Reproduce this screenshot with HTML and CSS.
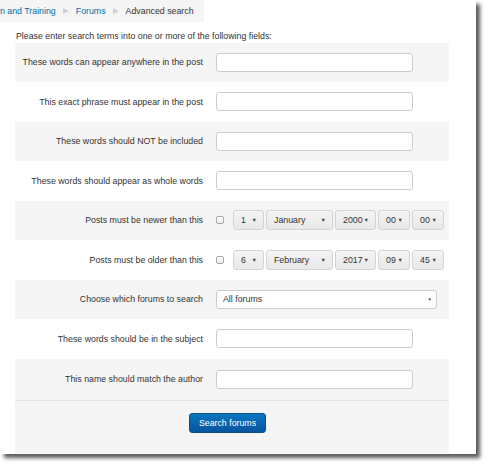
FILE: index.html
```html
<!DOCTYPE html>
<html>
<head>
<meta charset="utf-8">
<link rel="stylesheet" href="styles.css">
</head>
<body>
<div class="page">
  <div class="crumb">
    <a class="link">n and Training</a><span class="sep"></span><a class="link">Forums</a><span class="sep"></span><span class="current">Advanced search</span>
  </div>
  <div class="intro">Please enter search terms into one or more of the following fields:</div>
  <div class="form">
    <div class="row alt"><div class="label">These words can appear anywhere in the post</div><div class="input"></div></div>
    <div class="row"><div class="label">This exact phrase must appear in the post</div><div class="input"></div></div>
    <div class="row alt"><div class="label">These words should NOT be included</div><div class="input"></div></div>
    <div class="row"><div class="label">These words should appear as whole words</div><div class="input"></div></div>
    <div class="row alt"><div class="label">Posts must be newer than this</div>
      <div class="dates">
        <span class="check"></span>
        <span class="sel w-day"><span>1</span><span class="arr">▼</span></span>
        <span class="sel w-mon"><span>January</span><span class="arr">▼</span></span>
        <span class="sel w-year"><span>2000</span><span class="arr">▼</span></span>
        <span class="sel w-hm"><span>00</span><span class="arr">▼</span></span>
        <span class="sel w-hm"><span>00</span><span class="arr">▼</span></span>
      </div>
    </div>
    <div class="row"><div class="label">Posts must be older than this</div>
      <div class="dates">
        <span class="check"></span>
        <span class="sel w-day"><span>6</span><span class="arr">▼</span></span>
        <span class="sel w-mon"><span>February</span><span class="arr">▼</span></span>
        <span class="sel w-year"><span>2017</span><span class="arr">▼</span></span>
        <span class="sel w-hm"><span>09</span><span class="arr">▼</span></span>
        <span class="sel w-hm"><span>45</span><span class="arr">▼</span></span>
      </div>
    </div>
    <div class="row alt"><div class="label">Choose which forums to search</div>
      <div class="forums"><span>All forums</span><span class="arr small">▼</span></div>
    </div>
    <div class="row"><div class="label">These words should be in the subject</div><div class="input"></div></div>
    <div class="row alt last"><div class="label">This name should match the author</div><div class="input"></div></div>
    <div class="footer"><span class="btn">Search forums</span></div>
  </div>
</div>
</body>
</html>
```
FILE: styles.css
```css
html, body {
  margin: 0;
  padding: 0;
  background: #fff;
}
body {
  font-family: "Liberation Sans", Arial, sans-serif;
  font-size: 8.8px;
  color: #333;
  padding-bottom: 10px;
}
.page {
  width: 476px;
  height: 454px;
  background: #fff;
  box-shadow: 4px 4px 4px rgba(0, 0, 0, 0.65);
  overflow: hidden;
}
.crumb {
  display: inline-flex;
  align-items: center;
  height: 22px;
  background: #f5f5f5;
  padding-right: 10px;
  gap: 6px;
  line-height: 1;
}
.link {
  color: #0070a8;
}
.current {
  color: #333;
}
.sep {
  width: 0;
  height: 0;
  border-left: 6px solid #cfcfcf;
  border-top: 3.5px solid transparent;
  border-bottom: 3.5px solid transparent;
  margin: 0 1px;
}
.intro {
  box-sizing: border-box;
  height: 20.5px;
  padding: 8px 0 0 16px;
  line-height: 13px;
  white-space: nowrap;
}
.form {
  margin-left: 15px;
  width: 434px;
}
.row {
  display: flex;
  align-items: center;
  height: 39.5px;
  gap: 13px;
}
.row.last {
  height: 41.5px;
}
.alt {
  background: #f5f5f5;
}
.label {
  width: 188px;
  text-align: right;
  white-space: nowrap;
}
.input {
  box-sizing: border-box;
  width: 197px;
  height: 19px;
  background: #fff;
  border: 1px solid #ccc;
  border-radius: 3px;
}
.dates {
  display: flex;
  align-items: center;
  gap: 2px;
}
.check {
  box-sizing: border-box;
  width: 8px;
  height: 8px;
  border: 1px solid #a9a9a9;
  border-radius: 2px;
  background: linear-gradient(#fff, #e9e9e9);
  margin-right: 7px;
}
.sel {
  box-sizing: border-box;
  display: flex;
  align-items: center;
  justify-content: space-between;
  height: 20px;
  padding: 0 6px 0 7px;
  border: 1px solid #d4d4d4;
  border-radius: 3px;
  background: linear-gradient(#f4f4f4, #e8e8e8);
  color: #333;
}
.w-day { width: 31px; }
.w-mon { width: 67px; }
.w-year { width: 41px; }
.w-hm { width: 32px; }
.arr {
  font-size: 5.5px;
  color: #444;
}
.arr.small {
  font-size: 4.5px;
}
.forums {
  box-sizing: border-box;
  display: flex;
  align-items: center;
  justify-content: space-between;
  width: 221px;
  height: 19px;
  padding: 0 4px 0 6px;
  background: #fff;
  border: 1px solid #ccc;
  border-radius: 3px;
}
.footer {
  box-sizing: border-box;
  height: 53px;
  background: #f5f5f5;
  border-top: 1px solid #e6e6e6;
  padding: 12px 0 0 174px;
}
.btn {
  box-sizing: border-box;
  display: flex;
  align-items: center;
  justify-content: center;
  width: 77px;
  height: 20px;
  color: #fff;
  border-radius: 3px;
  border: 1px solid #0d4f8a;
  background: linear-gradient(#0a76c0, #0654a0);
}
```
